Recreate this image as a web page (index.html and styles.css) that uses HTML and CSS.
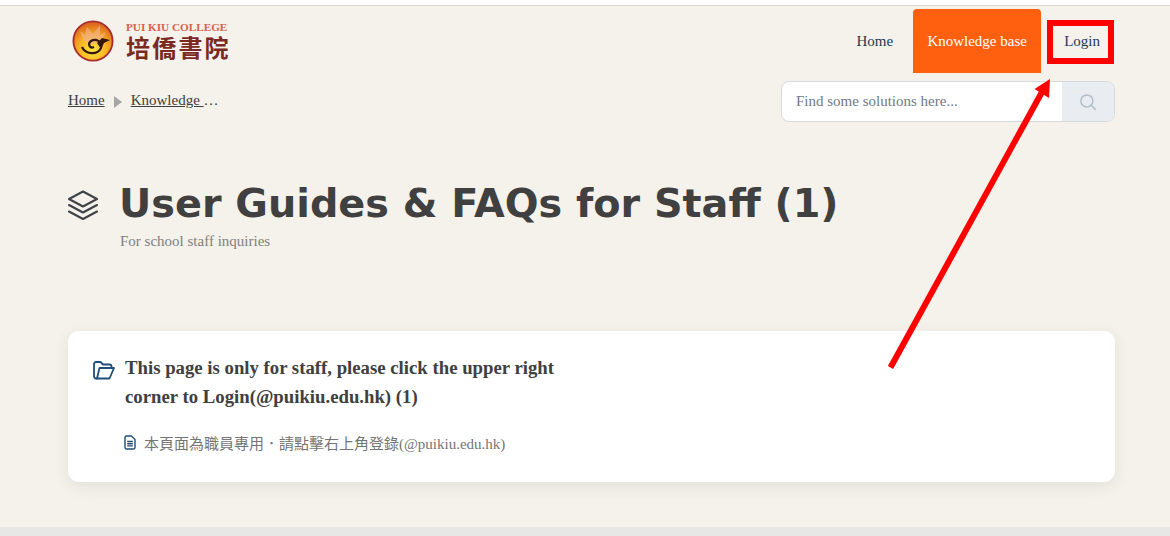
FILE: index.html
```html
<!DOCTYPE html>
<html lang="en">
<head>
<meta charset="utf-8">
<title>User Guides &amp; FAQs for Staff (1)</title>
<link rel="stylesheet" href="styles.css">
</head>
<body>
<div class="page">
  <header class="header">
    <a class="logo" href="#">
      <svg class="logo-mark" viewBox="0 0 42 42" width="42" height="42" aria-hidden="true">
        <defs>
          <radialGradient id="lg" cx="50%" cy="72%" r="70%">
            <stop offset="0" stop-color="#ffe83c"/>
            <stop offset="0.5" stop-color="#f9b323"/>
            <stop offset="1" stop-color="#d9601f"/>
          </radialGradient>
        </defs>
        <circle cx="21" cy="21" r="19.6" fill="url(#lg)" stroke="#a82a2e" stroke-width="1.8"/>
        <path d="M8 11 L13 15 L15 7 L21 14 L28 5 L28 15 L34 12 L29 21 L21 24 L12 21 Z" fill="#f1b08a" opacity=".7"/>
        <path d="M10 27 C13 34 25 36 29 28 C31 22 24 18 19 21 C15 24 18 29 22 27" fill="none" stroke="#34190f" stroke-width="2.2"/>
        <path d="M25 23 L30 18 L38 20 L32 23 L29 29 Z" fill="#34190f"/>
      </svg>
      <span class="logo-text">
        <span class="logo-en">PUI KIU COLLEGE</span>
        <span class="logo-zh">培僑書院</span>
      </span>
    </a>
    <div class="header-right">
      <nav class="nav">
        <a class="nav-link" href="#">Home</a>
        <a class="nav-link nav-active" href="#">Knowledge base</a>
        <a class="nav-link nav-login" href="#">Login</a>
      </nav>
    </div>
  </header>

  <div class="subbar">
    <div class="crumbs">
      <a class="crumb" href="#">Home</a>
      <span class="crumb-sep"></span>
      <a class="crumb" href="#">Knowledge </a><span class="crumb-more">…</span>
    </div>
    <form class="search">
      <span class="search-input">Find some solutions here...</span>
      <span class="search-btn">
        <svg viewBox="0 0 24 24" width="18" height="18" fill="none" stroke="#b3bfca" stroke-width="2" stroke-linecap="round" aria-hidden="true"><circle cx="10.5" cy="10.5" r="8"/><path d="M16.5 16.5 L22 22"/></svg>
      </span>
    </form>
  </div>

  <section class="title">
    <svg class="title-icon" viewBox="0 0 32 32" width="32" height="32" fill="none" stroke="#3f4348" stroke-width="2.1" stroke-linejoin="round" stroke-linecap="round" aria-hidden="true">
      <path d="M16 2.5 L30 10 L16 17.5 L2 10 Z"/>
      <path d="M2 16 L16 23.5 L30 16"/>
      <path d="M2 22.5 L16 30 L30 22.5"/>
    </svg>
    <div class="title-text">
      <h1>User Guides &amp; FAQs for Staff (1)</h1>
      <p>For school staff inquiries</p>
    </div>
  </section>

  <section class="card">
    <div class="card-head">
      <svg class="folder" viewBox="0 0 22 19" width="22" height="19" fill="none" stroke="#1f4e79" stroke-width="1.8" stroke-linejoin="round" stroke-linecap="round" aria-hidden="true">
        <path d="M4 17.5 H3 A2 2 0 0 1 1 15.5 V3 A2 2 0 0 1 3 1 H7.5 L10 3.5 H16.5 A2 2 0 0 1 18.5 5.5 V7"/>
        <path d="M4 17.5 H16.5 L21 7 H6.5 Z"/>
      </svg>
      <h2>This page is only for staff, please click the upper right corner to Login(@puikiu.edu.hk) (1)</h2>
    </div>
    <div class="article">
      <svg class="doc" viewBox="0 0 12 15" width="12" height="15" fill="none" stroke="#1f4e79" stroke-width="1.4" stroke-linejoin="round" aria-hidden="true">
        <path d="M1 2.5 A1.5 1.5 0 0 1 2.5 1 H7.5 L11 4.5 V12.5 A1.5 1.5 0 0 1 9.5 14 H2.5 A1.5 1.5 0 0 1 1 12.5 Z"/>
        <path d="M3.2 6.5 H8.8 M3.2 8.7 H8.8 M3.2 10.9 H8.8"/>
      </svg>
      <span>本頁面為職員專用．請點擊右上角登錄(@puikiu.edu.hk)</span>
    </div>
  </section>
</div>
<footer class="footer"></footer>

<svg class="annotation" viewBox="0 0 1170 536" width="1170" height="536" aria-hidden="true">
  <rect x="1050" y="23" width="61" height="38" fill="none" stroke="#ff0000" stroke-width="6"/>
  <path d="M890.5 367.5 L1042 92" stroke="#ff0000" stroke-width="6" fill="none"/>
  <path d="M1050 79 L1034.5 89 L1049 98 Z" fill="#ff0000"/>
</svg>
</body>
</html>
```
FILE: styles.css
```css
* { box-sizing: border-box; }
html, body { margin: 0; padding: 0; }
body {
  position: relative;
  width: 1170px;
  height: 536px;
  overflow: hidden;
  background: #f5f1eb;
  font-family: "Liberation Serif", "Noto Sans CJK TC", serif;
  color: #404040;
}
.page {
  height: 527px;
  padding: 5px 55px 0 68px;
  background: linear-gradient(#ffffff 5px, #dad6d1 5px, #dad6d1 6px, transparent 6px);
}
.header {
  display: flex;
  justify-content: space-between;
  height: 68px;
  padding-top: 4px;
}
.logo {
  display: flex;
  align-items: center;
  gap: 12px;
  height: 48px;
  margin-top: 8px;
  margin-left: 4px;
  text-decoration: none;
}
.logo-text { display: flex; flex-direction: column; margin-top: -1px; margin-left: 0; }
.logo-en {
  font-size: 11.2px;
  font-weight: 700;
  line-height: 13px;
  color: #d9624a;
  white-space: nowrap;
}
.logo-zh {
  font-family: "Noto Sans CJK TC", "Liberation Serif", sans-serif;
  font-size: 24px;
  font-weight: 700;
  line-height: 26px;
  letter-spacing: 2.2px;
  color: #7a2a22;
  white-space: nowrap;
}
.nav { display: flex; align-items: stretch; height: 64px; }
.nav-link {
  display: flex;
  align-items: center;
  padding: 0 15px;
  font-size: 15px;
  color: #1d3a57;
  text-decoration: none;
}
.nav-link:first-child { margin-right: 5px; }
.nav-active {
  width: 128px;
  padding: 0;
  justify-content: center;
  border-radius: 4px 4px 0 0;
  background: #ff6010;
  color: #ffffff;
}
.nav-login { margin-left: 8px; height: 64px; }
.subbar {
  display: flex;
  justify-content: space-between;
  height: 50px;
  margin-top: 3px;
}
.crumbs {
  display: flex;
  align-items: center;
  height: 48px;
  font-size: 15px;
  color: #404040;
  white-space: pre;
}
.crumb { color: #404040; text-decoration: underline; }
.crumb-sep {
  width: 0;
  height: 0;
  margin: 3px 9px 0 9px;
  border-style: solid;
  border-width: 6px 0 6px 8px;
  border-color: transparent transparent transparent #a6a6a6;
}
.search {
  display: flex;
  width: 334px;
  height: 41px;
  margin-top: 5px;
  border: 1px solid #d5d9dd;
  border-radius: 8px;
  overflow: hidden;
  background: #ffffff;
}
.search-input {
  flex: 1;
  padding-left: 14px;
  line-height: 39px;
  font-size: 15px;
  color: #6f7a85;
}
.search-btn {
  display: flex;
  align-items: center;
  justify-content: center;
  width: 52px;
  background: #e9edf2;
}
.title {
  display: flex;
  align-items: flex-start;
  gap: 20px;
  height: 205px;
  padding-top: 53px;
}
.title-icon { flex: none; margin-top: 10px; margin-left: -1px; }
.title h1 {
  margin: 0;
  font-family: "DejaVu Sans", sans-serif;
  font-size: 39.75px;
  font-weight: 700;
  line-height: 48px;
  white-space: nowrap;
  color: #404040;
}
.title p {
  margin: 6px 0 0 1px;
  font-size: 15px;
  line-height: 17px;
  color: #808080;
}
.card {
  width: 1047px;
  height: 151px;
  padding: 22px 24px 0;
  border-radius: 11px;
  background: #ffffff;
  box-shadow: 0 4px 16px rgba(60, 50, 40, .09);
}
.card-head { display: flex; align-items: flex-start; gap: 10px; }
.folder { flex: none; margin-top: 8px; margin-left: 1px; }
.card-head h2 {
  width: 440px;
  margin: 0;
  font-size: 18.75px;
  font-weight: 700;
  line-height: 29px;
  color: #404040;
}
.article {
  display: flex;
  align-items: center;
  gap: 8px;
  margin-top: 23px;
  margin-left: 32px;
  font-size: 15px;
  line-height: 20px;
  color: #757575;
}
.doc { flex: none; margin-top: -3px; }
.footer { height: 9px; background: #e7e7e5; }
.annotation { position: absolute; left: 0; top: 0; pointer-events: none; }
```
